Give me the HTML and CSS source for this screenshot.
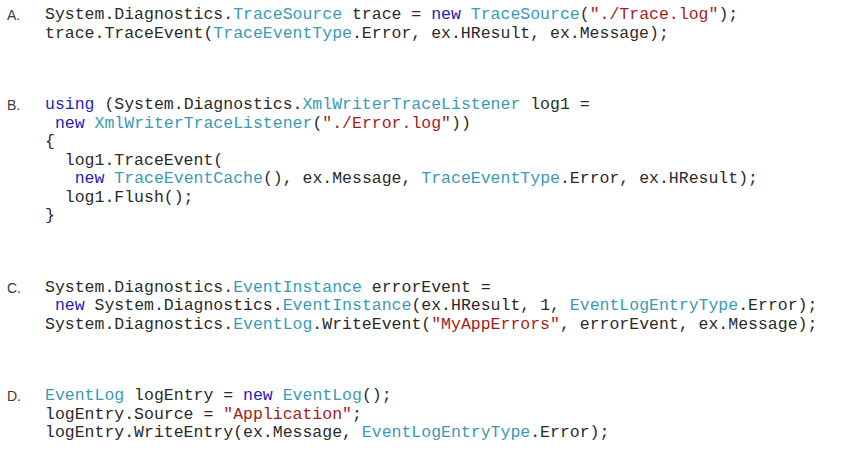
FILE: index.html
```html
<!DOCTYPE html>
<html>
<head>
<meta charset="utf-8">
<link rel="stylesheet" href="styles.css">
</head>
<body>
<div class="page">
  <div class="item">
    <div class="label">A.</div>
<pre class="code">System.Diagnostics.<span class="t">TraceSource</span> trace = <span class="k">new</span> <span class="t">TraceSource</span>(<span class="s">"./Trace.log"</span>);
trace.TraceEvent(<span class="t">TraceEventType</span>.Error, ex.HResult, ex.Message);</pre>
  </div>
  <div class="item">
    <div class="label">B.</div>
<pre class="code"><span class="k">using</span> (System.Diagnostics.<span class="t">XmlWriterTraceListener</span> log1 =
 <span class="k">new</span> <span class="t">XmlWriterTraceListener</span>(<span class="s">"./Error.log"</span>))
{
  log1.TraceEvent(
   <span class="k">new</span> <span class="t">TraceEventCache</span>(), ex.Message, <span class="t">TraceEventType</span>.Error, ex.HResult);
  log1.Flush();
}</pre>
  </div>
  <div class="item">
    <div class="label">C.</div>
<pre class="code">System.Diagnostics.<span class="t">EventInstance</span> errorEvent =
 <span class="k">new</span> System.Diagnostics.<span class="t">EventInstance</span>(ex.HResult, 1, <span class="t">EventLogEntryType</span>.Error);
System.Diagnostics.<span class="t">EventLog</span>.WriteEvent(<span class="s">"MyAppErrors"</span>, errorEvent, ex.Message);</pre>
  </div>
  <div class="item">
    <div class="label">D.</div>
<pre class="code"><span class="t">EventLog</span> logEntry = <span class="k">new</span> <span class="t">EventLog</span>();
logEntry.Source = <span class="s">"Application"</span>;
logEntry.WriteEntry(ex.Message, <span class="t">EventLogEntryType</span>.Error);</pre>
  </div>
</div>
</body>
</html>
```
FILE: styles.css
```css
html, body {
  margin: 0;
  padding: 0;
  background: #ffffff;
}

.page {
  display: flex;
  flex-direction: column;
  gap: 53px;
  padding-top: 6px;
}

.item {
  display: flex;
  flex-direction: row;
  align-items: flex-start;
}

.label {
  width: 38px;
  padding-left: 7px;
  font-family: "Liberation Sans", Arial, sans-serif;
  font-size: 14px;
  line-height: 18.5px;
  color: #3a3a3a;
}

.code {
  margin: 0;
  font-family: "Liberation Mono", "Courier New", monospace;
  font-size: 16.5px;
  line-height: 18.5px;
  color: #2a2a2a;
  white-space: pre;
}

.k {
  color: #2323b8;
}

.t {
  color: #3a9ab4;
}

.s {
  color: #a31c1c;
}
```
